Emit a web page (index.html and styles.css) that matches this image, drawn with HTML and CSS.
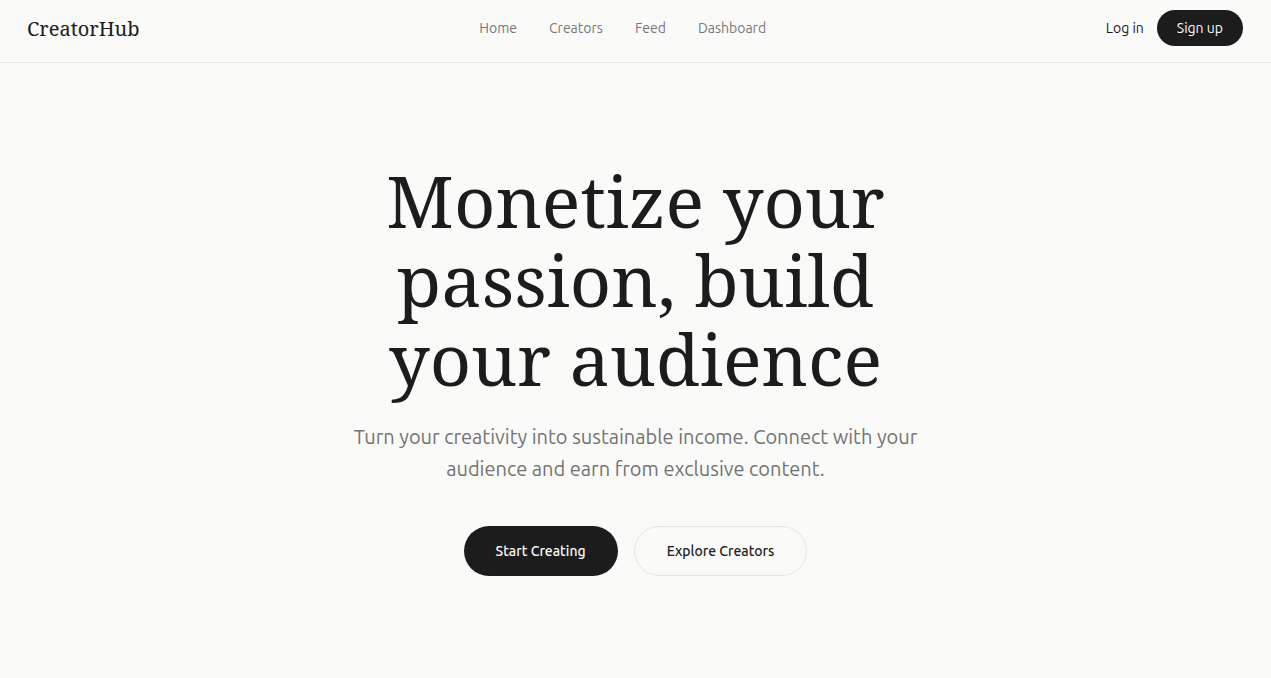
FILE: index.html
```html
<!DOCTYPE html>
<html lang="en">
<head>
  <meta charset="UTF-8">
  <title>CreatorHub</title>
  <link rel="stylesheet" href="styles.css">
</head>
<body>
  <header class="navbar">
    <a href="#" class="logo">CreatorHub</a>
    <nav class="nav-links">
      <a href="#">Home</a>
      <a href="#">Creators</a>
      <a href="#">Feed</a>
      <a href="#">Dashboard</a>
    </nav>
    <div class="nav-actions">
      <a href="#" class="login">Log in</a>
      <a href="#" class="btn btn-dark btn-small">Sign up</a>
    </div>
  </header>

  <main class="hero">
    <h1 class="hero-title">Monetize your<br>passion, build<br>your audience</h1>
    <p class="hero-text">Turn your creativity into sustainable income. Connect with your audience and earn from exclusive content.</p>
    <div class="hero-actions">
      <a href="#" class="btn btn-dark">Start Creating</a>
      <a href="#" class="btn btn-outline">Explore Creators</a>
    </div>
  </main>
</body>
</html>
```

FILE: styles.css
```css
* {
  box-sizing: border-box;
}

body {
  margin: 0;
  font-family: 'Ubuntu', 'Open Sans', 'Noto Sans', sans-serif;
  background-color: #fafaf9;
  color: #1c1c1c;
}

a {
  text-decoration: none;
  color: inherit;
}

.navbar {
  height: 63px;
  display: flex;
  justify-content: space-between;
  align-items: center;
  padding: 0 28px 6px 27px;
  border-bottom: 1px solid #e7e7e5;
}

.logo {
  font-family: 'Noto Serif', 'DejaVu Serif', serif;
  font-size: 20px;
  color: #1c1c1c;
}

.nav-links {
  display: flex;
  gap: 32px;
  font-size: 14px;
  color: #777777;
}

.nav-actions {
  display: flex;
  align-items: center;
  gap: 13px;
  font-size: 14px;
}

.btn {
  display: inline-flex;
  align-items: center;
  justify-content: center;
  border-radius: 999px;
  font-size: 14px;
  font-weight: 500;
  height: 50px;
  padding: 0 32px;
}

.btn-small {
  height: 36px;
  padding: 0 20px;
  font-weight: 400;
}

.btn-dark {
  background-color: #1c1c1c;
  color: #fafafa;
}

.btn-outline {
  background-color: #fafaf9;
  border: 1px solid #e5e5e3;
  color: #1c1c1c;
}

.hero {
  display: flex;
  flex-direction: column;
  align-items: center;
  text-align: center;
  padding-top: 98px;
}

.hero-title {
  font-family: 'Noto Serif', 'DejaVu Serif', serif;
  font-weight: 400;
  font-size: 72px;
  line-height: 1.1;
  margin: 0;
  color: #1c1c1c;
}

.hero-text {
  max-width: 576px;
  font-size: 20px;
  line-height: 32px;
  color: #737373;
  margin: 22px 0 0;
}

.hero-actions {
  display: flex;
  gap: 16px;
  margin-top: 41px;
}
```
